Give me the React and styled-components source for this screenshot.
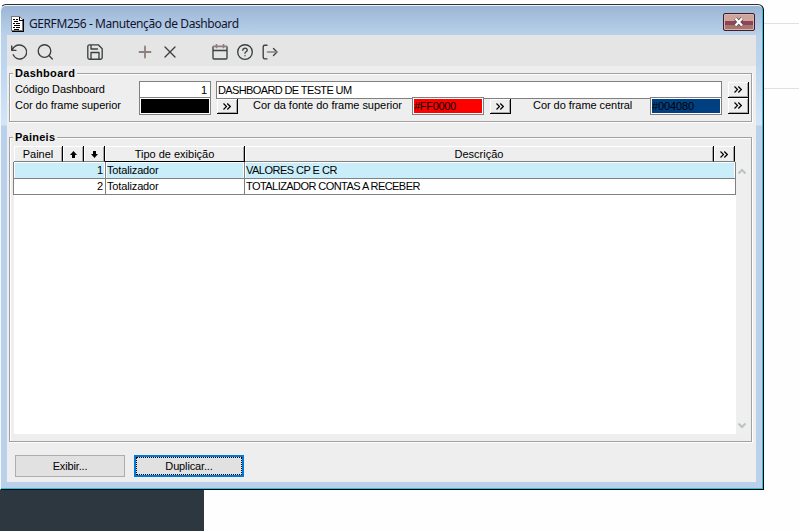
import React from "react";
import styled, { createGlobalStyle } from "styled-components";

const GlobalStyle = createGlobalStyle`
  * {
    box-sizing: border-box;
  }

  body {
    margin: 0;
    background: #fefefe;
    font-family: "Liberation Sans", Arial, sans-serif;
    font-size: 11px;
    color: #000;
  }
`;

const Desktop = styled.div`
  position: relative;
  width: 799px;
  height: 531px;
  overflow: hidden;
`;

const BackdropLine = styled.div`
  position: absolute;
  left: 764px;
  right: 0;
  top: ${(p) => p.$top}px;
  height: 1px;
  background: #e1e1e1;
`;

const Sidebar = styled.div`
  position: absolute;
  left: 0;
  top: 490px;
  width: 204px;
  height: 41px;
  background: #2d3740;
`;

const Window = styled.div`
  position: absolute;
  left: 0;
  top: 4px;
  width: 764px;
  height: 486px;
  padding: 1px 7px 6px 6px;
  border: 1px solid #000;
  border-left-color: #f4f8fc;
  border-top-color: #303030;
  border-radius: 6px 6px 0 0;
  background: linear-gradient(#9ab5d5, #b9d1ea 30px, #bdd5ee 60px, #d3e5f8 120px, #b9d1ea 121px);
  box-shadow: inset -1px -1px 0 #22c6e4, inset 0 1px 0 #eef5fc;
`;

const TitleBar = styled.div`
  display: flex;
  align-items: center;
  height: 29px;
  padding: 6px 1px 0 4px;
`;

const Title = styled.div`
  flex: 1;
  margin: 0 0 0 5px;
  font-family: "Noto Sans", "Open Sans", sans-serif;
  font-size: 12px;
  letter-spacing: -0.42px;
  line-height: 18px;
  white-space: nowrap;
  color: #14142e;
`;

const CloseButton = styled.button`
  display: flex;
  align-items: center;
  justify-content: center;
  width: 32px;
  height: 18px;
  margin-top: -3px;
  padding: 0;
  border: 1px solid #3c1f2a;
  border-radius: 2px;
  background: linear-gradient(#cfa59b 0 7px, #8c4658 7px 11px, #a9746d 11px);
  box-shadow: inset 0 0 0 1px #d9b3ab;
`;

const Content = styled.div`
  height: 447px;
  background: #eee;
`;

const Toolbar = styled.div`
  display: flex;
  align-items: center;
  height: 31px;
  padding: 3px 0 0 4px;
  background: #e5e5e5;
`;

const Tool = styled.svg`
  display: block;
  flex: none;
  width: 16px;
  height: 16px;
  margin-right: ${(p) => p.$gap || 0}px;
  fill: none;
  stroke: ${(p) => p.$color || "#3c4042"};
  stroke-width: 1.35;
  stroke-linecap: round;
  stroke-linejoin: round;
`;

const Group = styled.section`
  height: ${(p) => p.$height}px;
  margin: ${(p) => p.$top}px 4px 0 2px;
  border: 1px solid #a0a0a0;
  box-shadow: inset 1px 1px 0 #fff, 1px 1px 0 #fff;
`;

const Legend = styled.h2`
  width: max-content;
  height: 13px;
  margin: -7px 0 0 3px;
  padding: 0 2px;
  background: #eee;
  font-size: 11px;
  font-weight: bold;
  line-height: 13px;
  letter-spacing: ${(p) => p.$spacing || 0}px;
`;

const FieldRow = styled.div`
  display: flex;
  height: 16px;
  margin-top: ${(p) => p.$top || 0}px;
  padding-left: 5px;
`;

const Label = styled.label`
  width: ${(p) => p.$width}px;
  line-height: 16px;
  white-space: nowrap;
  letter-spacing: ${(p) => p.$spacing || 0}px;
`;

const Field = styled.div`
  flex: none;
  width: ${(p) => p.$width}px;
  height: 18px;
  margin-right: ${(p) => p.$gap}px;
  padding: 0 ${(p) => (p.$right ? 3 : 1)}px;
  border: 1px solid #808080;
  background: #fff;
  line-height: 17px;
  text-align: ${(p) => (p.$right ? "right" : "left")};
  letter-spacing: ${(p) => p.$spacing || 0}px;
  white-space: nowrap;
`;

const ColorField = styled(Field)`
  background: ${(p) => p.$color};
  box-shadow: inset 0 0 0 1px #fff;
`;

const MoreButton = styled.button`
  display: flex;
  flex: none;
  align-items: center;
  justify-content: center;
  width: 21px;
  height: ${(p) => (p.$short ? 15 : 16)}px;
  margin: ${(p) => (p.$short ? 2 : 1)}px ${(p) => p.$gap || 0}px 0 0;
  padding: 0;
  border: 0;
  border-right: 1px solid #000;
  border-bottom: 1px solid #000;
  background: #eee;
  box-shadow: inset 1px 1px 0 #fff, inset -1px -1px 0 #a8a8a8;
`;

const Grid = styled.div`
  display: flex;
  width: 735px;
  height: 288px;
  margin: 2px 0 0 3px;
`;

const Table = styled.div`
  width: 723px;
  background: linear-gradient(#eee, #eee) 0 0 / 1px 100% no-repeat, linear-gradient(#eee 16px, #fff 16px);
`;

const Header = styled.div`
  display: grid;
  grid-template-columns: 49px 21px 21px 140px 469px 21px;
  height: 16px;
  padding-left: 1px;
`;

const HeaderCell = styled.div`
  display: flex;
  align-items: center;
  justify-content: center;
  padding-top: 1px;
  border-right: 1px solid #000;
  border-bottom: 1px solid ${(p) => (p.$dark ? "#000" : "#808080")};
  background: #eee;
  box-shadow: inset 1px 1px 0 #fff, inset -1px 0 0 #a8a8a8;
`;

const Row = styled.div`
  display: grid;
  grid-template-columns: 92px 139px 491px;
  height: ${(p) => (p.$selected ? 16 : 17)}px;
  border-left: 1px solid #808080;
  background: ${(p) => (p.$selected ? "#c9eefa" : "#fff")};
`;

const Cell = styled.div`
  padding: 0 2px 0 1px;
  border-right: 1px solid #808080;
  border-bottom: 1px solid #808080;
  line-height: 16px;
  text-align: ${(p) => (p.$right ? "right" : "left")};
  letter-spacing: ${(p) => p.$spacing || 0}px;
  white-space: nowrap;
  box-shadow: ${(p) => (p.$selected ? "inset 1px 1px 0 #fff, inset -1px 0 0 #fff" : "none")};
`;

const ScrollBar = styled.div`
  display: flex;
  flex-direction: column;
  align-items: center;
  justify-content: space-between;
  width: 12px;
  margin-top: 16px;
  padding: 6px 0 5px;
  background: #efefef;
`;

const Actions = styled.div`
  display: flex;
  gap: 9px;
  padding: 13px 8px 0;
`;

const ActionButton = styled.button`
  width: 110px;
  height: 22px;
  padding: 0;
  border: ${(p) => (p.$focused ? "2px solid #0078d7" : "1px solid #adadad")};
  outline: ${(p) => (p.$focused ? "1px dotted #000" : "none")};
  outline-offset: -3px;
  background: #e1e1e1;
  color: #000;
  font: 11px "Liberation Sans", Arial, sans-serif;
  letter-spacing: -0.15px;
`;

const Chevrons = () => (
  <svg width="8" height="7" viewBox="0 0 8 7" fill="none" stroke="#000" strokeWidth="1.2">
    <path d="M.5.5l3 3-3 3M4.3.5l3 3-3 3" />
  </svg>
);

const SortArrow = ({ down }) => (
  <svg width="7" height="7" viewBox="0 0 7 7">
    <path d={down ? "M3.5 7L0 3h2V0h3v3h2z" : "M3.5 0L0 4h2v3h3V4h2z"} />
  </svg>
);

const ScrollArrow = ({ down }) => (
  <svg width="8" height="7" viewBox="0 0 8 7" fill="none" stroke="#bac4c2" strokeWidth="2">
    <path d={down ? "M.5 1.5L4 5l3.5-3.5" : "M.5 5.5L4 2l3.5 3.5"} />
  </svg>
);

const DocumentIcon = () => (
  <svg width="13" height="16" viewBox="0 0 13 16" shapeRendering="crispEdges">
    <path d="M.5.5h8l3 3v11H.5z" fill="#fff" stroke="#777" />
    <path d="M12 3v12.5H1M8.5 1v3h3" fill="none" stroke="#000" />
    <path d="M2 3.5h2m1 0h2M3 5.5h4M2 7.5h2m1 0h4M3 9.5h6M2 11.5h2m1 0h4M3 13.5h5" stroke="#000" />
  </svg>
);

const CloseIcon = () => (
  <svg width="12" height="10" viewBox="0 0 12 10" fill="none" style={{ flex: "none" }}>
    <path d="M2.5 1.5l6.500 7M9 1.500l-6.500 7" stroke="#53434c" strokeWidth="4" />
    <path d="M2.5 1.5l6.500 7M9 1.500l-6.500 7" stroke="#fff" strokeWidth="2.4" />
  </svg>
);

const rows = [
  { id: 1, type: "Totalizador", description: "VALORES CP E CR", spacing: -0.52 },
  { id: 2, type: "Totalizador", description: "TOTALIZADOR CONTAS A RECEBER", spacing: -0.56 },
];

const ToolbarIcons = () => (
  <Toolbar>
    <Tool $gap={10} viewBox="0 0 16 16">
      <path d="M.7 2v4.300H5M1 6.200C2.300 3 5 1 8.500 1a7 7 0 1 1-6.300 9.800" />
    </Tool>
    <Tool $gap={34} viewBox="0 0 16 16">
      <circle cx="7.5" cy="7" r="6.3" />
      <path d="M12 11.500l3.300 3.500" />
    </Tool>
    <Tool $gap={34} viewBox="0 0 16 16">
      <path d="M.8 2.500Q.8.800 2.500.8h8.700l4 4v8.700q0 1.700-1.700 1.700h-11Q.8 15.200.8 13.500zM4 1v4h6.500M4 15V8.500h8V15" />
    </Tool>
    <Tool $gap={9} $color="#8e7e7d" viewBox="0 0 16 16">
      <path d="M8 2.500v11M2.500 8h11" strokeWidth="1.8" />
    </Tool>
    <Tool $gap={34} viewBox="0 0 16 16">
      <path d="M3 3l10 10M13 3L3 13" />
    </Tool>
    <Tool $gap={9} viewBox="0 0 16 16">
      <path d="M1 3v11q0 1 1 1h12q1 0 1-1V3M1 6.500h14" />
      <path d="M1.500 2.300h13M4.500.7v2.800M11.500.7v2.800" stroke="#8e7e7d" strokeWidth="1.7" />
    </Tool>
    <Tool $gap={9} viewBox="0 0 16 16">
      <circle cx="8" cy="8" r="7.3" />
      <path d="M5.800 6.300C6 3.400 10.500 3.500 10.200 6.300 10 7.800 8 7.800 8 9.300M8 11.700v.1" />
    </Tool>
    <Tool viewBox="0 0 16 16">
      <path d="M5 1.200H2.700Q1.200 1.200 1.200 2.700v10.600q0 1.500 1.500 1.500H5M11.500 4.500L15 8l-3.500 3.500" />
      <path d="M5.500 8h9" stroke="#8e7e7d" strokeWidth="1.6" />
    </Tool>
  </Toolbar>
);

const DashboardGroup = () => (
  <Group $top={7} $height={49}>
    <Legend $spacing={0.3}>Dashboard</Legend>
    <FieldRow $top={1}>
      <Label $width={124} $spacing={-0.12}>Código Dashboard</Label>
      <Field $width={72} $gap={5} $right>1</Field>
      <Field $width={506} $gap={6} $spacing={-0.62}>DASHBOARD DE TESTE UM</Field>
      <MoreButton><Chevrons /></MoreButton>
    </FieldRow>
    <FieldRow>
      <Label $width={124} $spacing={-0.05}>Cor do frame superior</Label>
      <ColorField $width={72} $gap={6} $color="#000" />
      <MoreButton $short $gap={15}><Chevrons /></MoreButton>
      <Label $width={159} $spacing={-0.03}>Cor da fonte do frame superior</Label>
      <ColorField $width={72} $gap={6} $color="#f00" $spacing={-0.3}>#FF0000</ColorField>
      <MoreButton $short $gap={22}><Chevrons /></MoreButton>
      <Label $width={117} $spacing={-0.05}>Cor do frame central</Label>
      <ColorField $width={72} $gap={6} $color="#004080" $spacing={-0.1}>#004080</ColorField>
      <MoreButton><Chevrons /></MoreButton>
    </FieldRow>
  </Group>
);

const PanelsGroup = () => (
  <Group $top={15} $height={305}>
    <Legend $spacing={0.25}>Paineis</Legend>
    <Grid>
      <Table>
        <Header>
          <HeaderCell>Painel</HeaderCell>
          <HeaderCell><SortArrow /></HeaderCell>
          <HeaderCell><SortArrow down /></HeaderCell>
          <HeaderCell $dark>Tipo de exibição</HeaderCell>
          <HeaderCell>Descrição</HeaderCell>
          <HeaderCell><Chevrons /></HeaderCell>
        </Header>
        {rows.map((row) => (
          <Row key={row.id} $selected={row.id === 1}>
            <Cell $selected={row.id === 1} $right>{row.id}</Cell>
            <Cell $selected={row.id === 1} $spacing={-0.15}>{row.type}</Cell>
            <Cell $selected={row.id === 1} $spacing={row.spacing}>{row.description}</Cell>
          </Row>
        ))}
      </Table>
      <ScrollBar>
        <ScrollArrow />
        <ScrollArrow down />
      </ScrollBar>
    </Grid>
  </Group>
);

const App = () => (
  <>
    <GlobalStyle />
    <Desktop>
      <BackdropLine $top={23} />
      <BackdropLine $top={88} />
      <Sidebar />
      <Window>
        <TitleBar>
          <DocumentIcon />
          <Title>GERFM256 - Manutenção de Dashboard</Title>
          <CloseButton aria-label="Fechar"><CloseIcon /></CloseButton>
        </TitleBar>
        <Content>
          <ToolbarIcons />
          <DashboardGroup />
          <PanelsGroup />
          <Actions>
            <ActionButton>Exibir...</ActionButton>
            <ActionButton $focused>Duplicar...</ActionButton>
          </Actions>
        </Content>
      </Window>
    </Desktop>
  </>
);

export default App;
